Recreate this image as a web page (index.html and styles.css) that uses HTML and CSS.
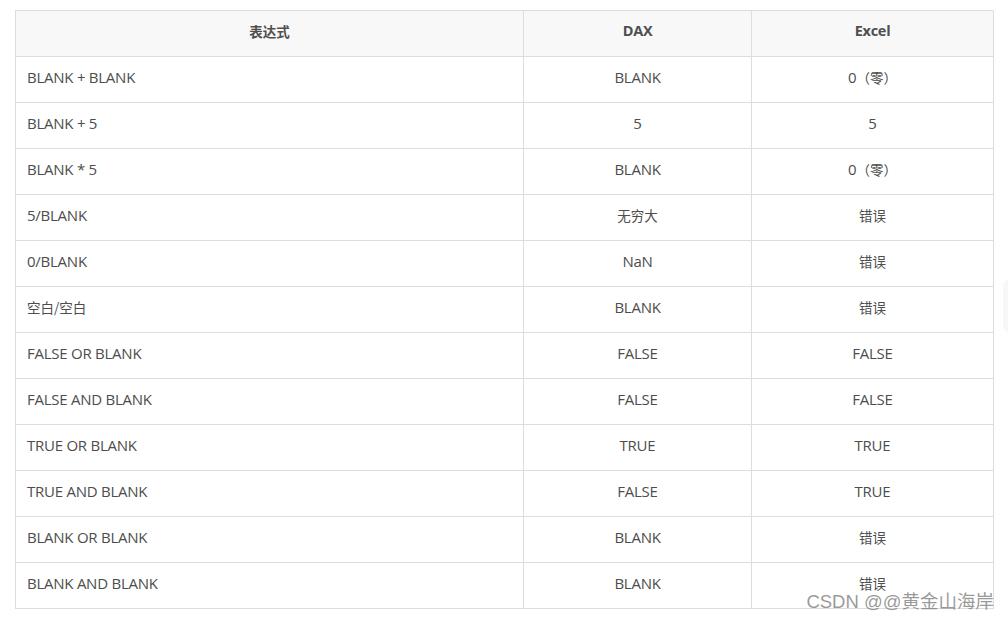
FILE: index.html
```html
<!DOCTYPE html>
<html lang="zh">
<head>
<meta charset="utf-8">
<link rel="stylesheet" href="styles.css">
</head>
<body>
<div class="page">
  <table class="tbl">
    <colgroup>
      <col class="c1"><col class="c2"><col class="c3">
    </colgroup>
    <thead>
      <tr><th><span class="cjk">表达式</span></th><th>DAX</th><th>Excel</th></tr>
    </thead>
    <tbody>
      <tr><td>BLANK + BLANK</td><td>BLANK</td><td>0<span class="cjk">（零）</span></td></tr>
      <tr><td>BLANK + 5</td><td>5</td><td>5</td></tr>
      <tr><td>BLANK * 5</td><td>BLANK</td><td>0<span class="cjk">（零）</span></td></tr>
      <tr><td>5/BLANK</td><td><span class="cjk">无穷大</span></td><td><span class="cjk">错误</span></td></tr>
      <tr><td>0/BLANK</td><td>NaN</td><td><span class="cjk">错误</span></td></tr>
      <tr><td><span class="cjk">空白/空白</span></td><td>BLANK</td><td><span class="cjk">错误</span></td></tr>
      <tr><td>FALSE OR BLANK</td><td>FALSE</td><td>FALSE</td></tr>
      <tr><td>FALSE AND BLANK</td><td>FALSE</td><td>FALSE</td></tr>
      <tr><td>TRUE OR BLANK</td><td>TRUE</td><td>TRUE</td></tr>
      <tr><td>TRUE AND BLANK</td><td>FALSE</td><td>TRUE</td></tr>
      <tr><td>BLANK OR BLANK</td><td>BLANK</td><td><span class="cjk">错误</span></td></tr>
      <tr><td>BLANK AND BLANK</td><td>BLANK</td><td><span class="cjk">错误</span></td></tr>
    </tbody>
  </table>
  <div class="watermark">CSDN @@黄金山海岸</div>
  <div class="side-tab"></div>
</div>
</body>
</html>
```

FILE: styles.css
```css
html, body {
  margin: 0;
  padding: 0;
  background: #fff;
}
.page {
  position: relative;
  width: 1008px;
  height: 621px;
  padding: 10px 0 0 15px;
  box-sizing: border-box;
  overflow: hidden;
}
.tbl {
  border-collapse: collapse;
  table-layout: fixed;
  width: 978px;
  font-family: "Open Sans", "Noto Sans CJK SC", sans-serif;
  font-size: 15px;
  letter-spacing: -0.25px;
  color: #4d4d4d;
}
.c1 { width: 508px; }
.c2 { width: 228px; }
.c3 { width: 242px; }
.tbl th, .tbl td {
  border: 1px solid #dddddd;
  height: 46px;
  padding: 0 11px 6px;
  box-sizing: border-box;
  text-align: center;
  vertical-align: middle;
}
.tbl th {
  background: #f8f8f8;
  font-weight: 700;
  font-size: 14.5px;
  color: #4f4f4f;
}
.tbl td:first-child {
  text-align: left;
}
.cjk {
  font-family: "Noto Sans CJK SC", sans-serif;
  font-size: 13.5px;
  letter-spacing: 0;
}
.watermark {
  position: absolute;
  right: 14px;
  bottom: 8px;
  font-family: "Liberation Sans", "Noto Sans CJK SC", sans-serif;
  font-size: 18.5px;
  color: rgba(120, 120, 120, 0.75);
  white-space: nowrap;
}
.side-tab {
  position: absolute;
  left: 1003px;
  top: 280px;
  width: 14px;
  height: 52px;
  border-radius: 6px;
  background: #f7f7f7;
}
```
